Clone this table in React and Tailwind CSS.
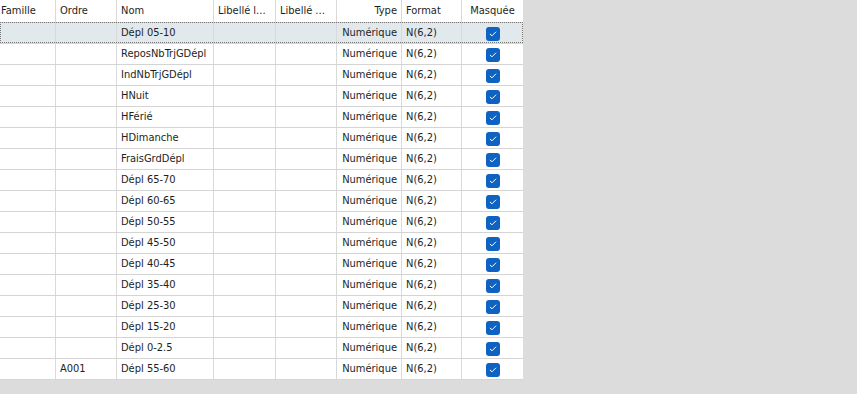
const rows = [
    { ordre: '', nom: 'Dépl 05-10' },
    { ordre: '', nom: 'ReposNbTrjGDépl' },
    { ordre: '', nom: 'IndNbTrjGDépl' },
    { ordre: '', nom: 'HNuit' },
    { ordre: '', nom: 'HFérié' },
    { ordre: '', nom: 'HDimanche' },
    { ordre: '', nom: 'FraisGrdDépl' },
    { ordre: '', nom: 'Dépl 65-70' },
    { ordre: '', nom: 'Dépl 60-65' },
    { ordre: '', nom: 'Dépl 50-55' },
    { ordre: '', nom: 'Dépl 45-50' },
    { ordre: '', nom: 'Dépl 40-45' },
    { ordre: '', nom: 'Dépl 35-40' },
    { ordre: '', nom: 'Dépl 25-30' },
    { ordre: '', nom: 'Dépl 15-20' },
    { ordre: '', nom: 'Dépl 0-2.5' },
    { ordre: 'A001', nom: 'Dépl 55-60' },
];

const cols = 'grid grid-cols-[56px_61px_97px_62px_61px_65px_60px_61px]';
const cell = 'border-r border-[#d9d9d9] px-1 pt-px whitespace-nowrap overflow-hidden flex items-center';

const CheckBox = () => (
    <span className="w-[14px] h-[14px] rounded-[3px] bg-[#0e62c2] flex items-center justify-center">
        <svg width="10" height="10" viewBox="0 0 10 10" fill="none">
            <path d="M2.2 5.2 L4 6.8 L7.8 3" stroke="white" strokeWidth="1" strokeLinecap="round" strokeLinejoin="round" />
        </svg>
    </span>
);

export default function App() {
    return (
        <div className="w-[857px] h-[394px] bg-[#dcdcdc] text-[11px] text-[#1e1e1e] overflow-hidden" style={{ fontFamily: '"DejaVu Sans Condensed", "DejaVu Sans", sans-serif' }}>
            <div className="w-[523px] bg-white">
                <div className={`${cols} h-[22px]`}>
                    <div className={`${cell} pl-[1px]`}>Famille</div>
                    <div className={cell}>Ordre</div>
                    <div className={cell}>Nom</div>
                    <div className={cell}>Libellé l...</div>
                    <div className={cell}>Libellé ...</div>
                    <div className={`${cell} justify-end`}>Type</div>
                    <div className={cell}>Format</div>
                    <div className={`${cell} justify-center border-r-0`}>Masquée</div>
                </div>
                {rows.map((r, i) => (
                    <div
                        key={i}
                        className={`${cols} h-[21px] relative ${i === 0 ? 'bg-[#e2e9ed]' : ''} border-t border-[#d4d4d4]`}
                    >
                        {i === 0 && (
                            <div className="absolute inset-0 -top-px border border-dotted border-[#777] pointer-events-none" />
                        )}
                        <div className={cell}></div>
                        <div className={cell}>{r.ordre}</div>
                        <div className={cell}>{r.nom}</div>
                        <div className={cell}></div>
                        <div className={cell}></div>
                        <div className={`${cell} justify-end`}>Numérique</div>
                        <div className={cell}>N(6,2)</div>
                        <div className={`${cell} justify-center border-r-0`}>
                            <CheckBox />
                        </div>
                    </div>
                ))}
                <div className="border-t border-[#d4d4d4]" />
            </div>
        </div>
    );
}
